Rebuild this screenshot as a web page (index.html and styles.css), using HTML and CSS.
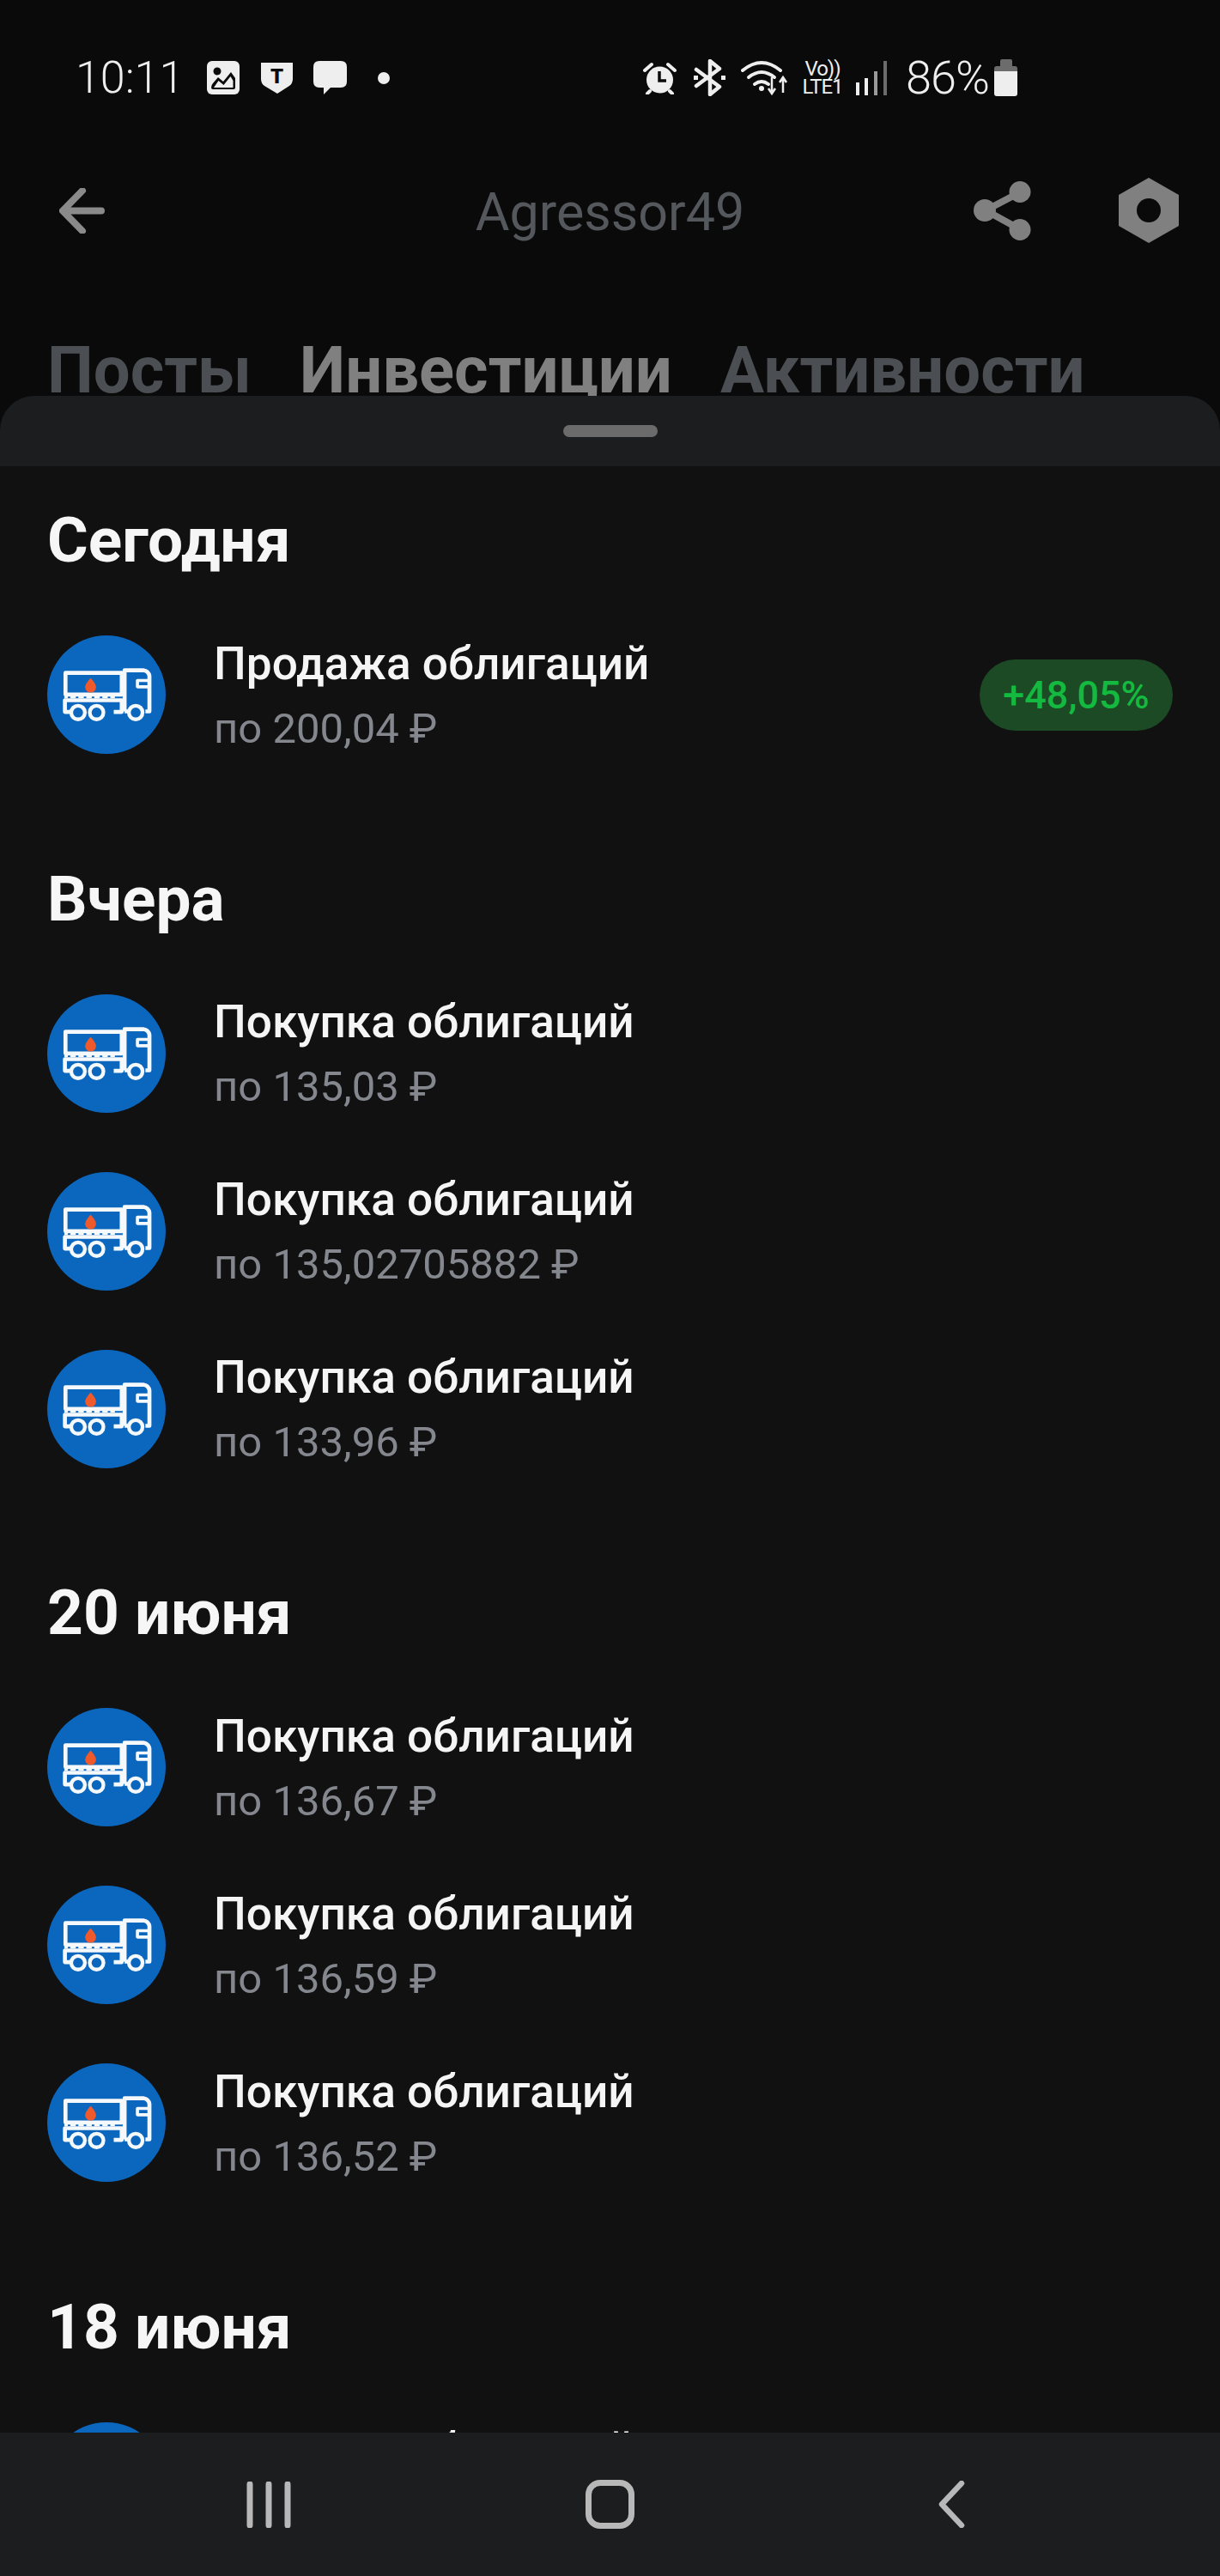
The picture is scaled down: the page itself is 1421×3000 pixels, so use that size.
FILE: index.html
```html
<!DOCTYPE html>
<html lang="ru">
<head>
    <meta charset="UTF-8">
    <title>Agressor49</title>
    <link rel="stylesheet" href="styles.css">
</head>
<body>
    <svg class="defs" width="0" height="0">
        <symbol id="truck" viewBox="0 0 415 415">
            <circle cx="207.5" cy="207.5" r="207.5" fill="#0b66bd"/>
            <g fill="none" stroke="#f6f9fc" stroke-width="14" stroke-linejoin="round">
                <rect x="64" y="131" width="197" height="76"/>
                <path d="M60 216h12m9 0h19m9 0h19m9 0h19m9 0h19m9 0h19m9 0h16" stroke-width="8"/>
                <path d="M85 268h-23v-41h199v41h-28"/>
                <path d="M271 266v-144h65q19 3 22 20v124h-14M271 266h14"/>
                <path d="M358 158h-42v22h42" stroke-width="11"/>
                <circle cx="108" cy="270" r="24" stroke-width="13"/>
                <circle cx="173" cy="270" r="24" stroke-width="13"/>
                <circle cx="310" cy="270" r="24" stroke-width="13"/>
            </g>
            <path d="M152 149q-19 21-19 32a19 19 0 0 0 38 0q0-11-19-32z" fill="#ee5a2c"/>
        </symbol>
    </svg>

    <div class="top">
        <div class="status">
            <span class="time">10:11</span>
            <svg class="ic-image" width="38" height="39" viewBox="0 0 38 39">
                <rect width="38" height="39" rx="6" fill="#eee"/>
                <circle cx="12" cy="12" r="4.500" fill="#0a0a0a"/>
                <path d="M5 31q0-3 2-5l6-7 6 5 9-11 5 7v11q0 2-2 2H7q-2 0-2-2z" fill="#0a0a0a"/>
                <path d="M8 31l5.500-8 6 5 8-10 3 5v8z" fill="#eee"/>
            </svg>
            <svg class="ic-shield" width="37" height="36" viewBox="0 0 37 36">
                <path d="M0 0h37v19q0 5-4 8l-14 9-15-9q-4-3-4-8z" fill="#eee"/>
                <text class="shield-t" x="18.500" y="24" text-anchor="middle">T</text>
            </svg>
            <svg class="ic-chat" width="39" height="39" viewBox="0 0 39 39">
                <path d="M7 0h25q7 0 7 7v17q0 7-7 7H20l-8 8v-8H7q-7 0-7-7V7q0-7 7-7z" fill="#eee"/>
            </svg>
            <span class="dot"></span>

            <div class="status-right">
                <svg width="39" height="38" viewBox="0 0 39 38">
                    <circle cx="19.500" cy="21" r="15.500" fill="#eee"/>
                    <path d="M19 11v11h8" fill="none" stroke="#0a0a0a" stroke-width="3.500"/>
                    <path d="M2 10l8-7M37 10l-8-7M8 34l-3 3M31 34l3 3" stroke="#eee" stroke-width="4" stroke-linecap="round"/>
                </svg>
                <svg class="s-bt" width="37" height="43" viewBox="0 0 37 43">
                    <path d="M3 12l27 20-11 9V2l11 9L3 31" fill="none" stroke="#eee" stroke-width="4.500" stroke-linejoin="round" stroke-linecap="round"/>
                    <path d="M0 21.500h5M32 21.500h5" stroke="#eee" stroke-width="5"/>
                </svg>
                <svg class="s-wifi" width="55" height="41" viewBox="0 0 55 41">
                    <g fill="none" stroke="#eee" stroke-width="4" stroke-linecap="round">
                        <path d="M2 12q22-18 44 0"/>
                        <path d="M9 20q15-12 30 0"/>
                        <path d="M16 28q8-6 16 0"/>
                    </g>
                    <circle cx="24" cy="33" r="3" fill="#eee"/>
                    <path d="M36 20v18m-4-5l4 6 4-6M49 38V21m-4 5l4-6 4 6" fill="none" stroke="#eee" stroke-width="2.500"/>
                </svg>
                <div class="lte"><span>Vo))</span><span>LTE1</span></div>
                <svg class="s-signal" width="36" height="40" viewBox="0 0 36 40">
                    <rect y="25" width="4" height="15" fill="#eee"/>
                    <rect x="10" y="20" width="4" height="20" fill="#eee"/>
                    <rect x="21" y="12" width="4" height="28" fill="#9a9a9a"/>
                    <rect x="32" y="0" width="4" height="40" fill="#6c6c6c"/>
                </svg>
                <span class="battery-text">86%</span>
                <div class="battery"><span class="battery-cap"></span><span class="battery-body"></span></div>
            </div>
        </div>

        <div class="toolbar">
            <svg class="back" width="53" height="53" viewBox="0 0 53 53">
                <path d="M27 3L4 26.500 27 50M5 26.500h44" fill="none" stroke="#8a8a8a" stroke-width="8" stroke-linecap="round" stroke-linejoin="round"/>
            </svg>
            <div class="title">Agressor49</div>
            <div class="toolbar-right">
                <svg width="68" height="69" viewBox="0 0 68 69">
                    <path d="M14 34L54 13M14 34L54 56" stroke="#808080" stroke-width="8" fill="none"/>
                    <circle cx="13" cy="34" r="13" fill="#808080"/>
                    <circle cx="54" cy="12.500" r="12.500" fill="#808080"/>
                    <circle cx="54" cy="56.500" r="12.500" fill="#808080"/>
                </svg>
                <svg width="70" height="76" viewBox="0 0 70 76">
                    <path d="M35 0l35 20v36L35 76 0 56V20z" fill="#808080"/>
                    <circle cx="35" cy="38" r="14" fill="#0a0a0a"/>
                </svg>
            </div>
        </div>

        <div class="tabs">
            <span class="tab">Посты</span>
            <span class="tab tab-active">Инвестиции</span>
            <span class="tab">Активности</span>
        </div>
    </div>

    <div class="sheet-head"><span class="handle"></span></div>

    <div class="list">
        <section class="group">
            <h2 class="group-title">Сегодня</h2>
            <div class="row">
                <svg class="row-icon"><use href="#truck"/></svg>
                <div class="row-text">
                    <div class="row-name">Продажа облигаций</div>
                    <div class="row-price">по 200,04 ₽</div>
                </div>
                <span class="badge">+48,05%</span>
            </div>
        </section>

        <section class="group">
            <h2 class="group-title">Вчера</h2>
            <div class="row">
                <svg class="row-icon"><use href="#truck"/></svg>
                <div class="row-text">
                    <div class="row-name">Покупка облигаций</div>
                    <div class="row-price">по 135,03 ₽</div>
                </div>
            </div>
            <div class="row">
                <svg class="row-icon"><use href="#truck"/></svg>
                <div class="row-text">
                    <div class="row-name">Покупка облигаций</div>
                    <div class="row-price">по 135,02705882 ₽</div>
                </div>
            </div>
            <div class="row">
                <svg class="row-icon"><use href="#truck"/></svg>
                <div class="row-text">
                    <div class="row-name">Покупка облигаций</div>
                    <div class="row-price">по 133,96 ₽</div>
                </div>
            </div>
        </section>

        <section class="group">
            <h2 class="group-title">20 июня</h2>
            <div class="row">
                <svg class="row-icon"><use href="#truck"/></svg>
                <div class="row-text">
                    <div class="row-name">Покупка облигаций</div>
                    <div class="row-price">по 136,67 ₽</div>
                </div>
            </div>
            <div class="row">
                <svg class="row-icon"><use href="#truck"/></svg>
                <div class="row-text">
                    <div class="row-name">Покупка облигаций</div>
                    <div class="row-price">по 136,59 ₽</div>
                </div>
            </div>
            <div class="row">
                <svg class="row-icon"><use href="#truck"/></svg>
                <div class="row-text">
                    <div class="row-name">Покупка облигаций</div>
                    <div class="row-price">по 136,52 ₽</div>
                </div>
            </div>
        </section>

        <section class="group">
            <h2 class="group-title">18 июня</h2>
            <div class="row">
                <svg class="row-icon"><use href="#truck"/></svg>
                <div class="row-text">
                    <div class="row-name">Покупка облигаций</div>
                    <div class="row-price">по 136,50 ₽</div>
                </div>
            </div>
        </section>
    </div>

    <div class="nav">
        <div class="nav-cell">
            <svg width="52" height="54" viewBox="0 0 52 54">
                <path d="M4 3v48M26 3v48M48 3v48" stroke="#b8b8b8" stroke-width="7" stroke-linecap="round"/>
            </svg>
        </div>
        <div class="nav-cell"><span class="nav-home"></span></div>
        <div class="nav-cell">
            <svg width="34" height="55" viewBox="0 0 34 55">
                <path d="M28 3L5 27.500 28 52" fill="none" stroke="#b8b8b8" stroke-width="6.500" stroke-linecap="round" stroke-linejoin="round"/>
            </svg>
        </div>
    </div>
</body>
</html>
```

FILE: styles.css
```css
body {
    margin: 0;
    height: 3000px;
    display: flex;
    flex-direction: column;
    overflow: hidden;
    background-color: #0a0a0a;
    font-family: Roboto, "Noto Sans", sans-serif;
}

.defs {
    display: block;
    height: 0;
}

/* dimmed part above the sheet, tabs get cut by its bottom edge */
.top {
    height: 461px;
    flex: none;
    overflow: hidden;
}

.status {
    height: 181px;
    display: flex;
    align-items: center;
    padding-left: 88px;
    padding-right: 236px;
    color: #eee;
}

.time {
    width: 122px;
    font-size: 52px;
    font-weight: 300;
    line-height: 44px;
}

.ic-image {
    margin-left: 31px;
}

.ic-shield {
    margin-left: 25px;
}

.shield-t {
    font-family: Roboto, sans-serif;
    font-size: 24px;
    font-weight: 900;
    fill: #0a0a0a;
}

.ic-chat {
    margin-left: 24px;
}

.dot {
    width: 14px;
    height: 14px;
    margin-left: 36px;
    border-radius: 50%;
    background-color: #eee;
}

.status-right {
    margin-left: auto;
    display: flex;
    align-items: center;
}

.s-bt {
    margin-left: 20px;
}

.s-wifi {
    margin-left: 18px;
}

.lte {
    width: 50px;
    margin-left: 15px;
    display: flex;
    flex-direction: column;
    align-items: center;
    color: #eee;
    font-size: 24px;
    line-height: 21px;
    letter-spacing: -1px;
}

.s-signal {
    margin-left: 14px;
}

.battery-text {
    width: 94px;
    margin-left: 22px;
    font-size: 54px;
    font-weight: 300;
    letter-spacing: -1px;
    line-height: 44px;
}

.battery {
    width: 27px;
    margin-left: 9px;
    display: flex;
    flex-direction: column;
    align-items: center;
}

.battery-cap {
    width: 14px;
    height: 8px;
    border-radius: 2px 2px 0 0;
    background-color: #6c6c6c;
}

.battery-body {
    width: 27px;
    height: 35px;
    border-radius: 3px;
    background: linear-gradient(#6c6c6c 6px, #eee 6px);
}

.toolbar {
    height: 128px;
    display: grid;
    grid-template-columns: 1fr auto 1fr;
    align-items: center;
    padding: 0 48px;
}

.back {
    margin-left: 21px;
}

.title {
    font-size: 61px;
    line-height: 70px;
    padding-top: 3px;
    color: #54575b;
}

.toolbar-right {
    display: flex;
    justify-content: flex-end;
    align-items: center;
    gap: 101px;
}

.tabs {
    display: flex;
    gap: 56px;
    padding-left: 55px;
    padding-top: 82px;
    font-size: 76px;
    line-height: 80px;
    font-weight: 700;
    color: #4b4e52;
    white-space: nowrap;
}

.tab-active {
    color: #808080;
}

.sheet-head {
    height: 82px;
    flex: none;
    display: flex;
    justify-content: center;
    padding-top: 34px;
    box-sizing: border-box;
    border-radius: 40px 40px 0 0;
    background-color: #1c1d1f;
}

.handle {
    width: 110px;
    height: 14px;
    border-radius: 7px;
    background-color: #6b6b6b;
}

.list {
    flex: 1;
    min-height: 0;
    overflow: hidden;
    box-sizing: border-box;
    padding: 51px 55px 0;
    background-color: #111112;
}

.group {
    margin-bottom: 99px;
}

.group-title {
    margin: 0 0 41.5px;
    height: 70px;
    font-size: 73px;
    line-height: 70px;
    font-weight: 700;
    color: #f6f6f6;
}

.row {
    height: 207px;
    display: flex;
    align-items: center;
}

.row-icon {
    width: 138px;
    height: 138px;
    flex: none;
}

.row-text {
    flex: 1;
    margin-left: 56px;
    padding-top: 3px;
}

.row-name {
    font-size: 53.2px;
    line-height: 76px;
    font-weight: 500;
    color: #f5f5f5;
}

.row-price {
    font-size: 49px;
    line-height: 76px;
    color: #84878e;
}

.badge {
    width: 225px;
    height: 83px;
    border-radius: 42px;
    display: flex;
    justify-content: center;
    align-items: center;
    background-color: #1b4a24;
    color: #14b93f;
    font-size: 45px;
    font-weight: 500;
}

.nav {
    height: 167px;
    flex: none;
    display: flex;
    justify-content: center;
    align-items: center;
    background-color: #1c1d1f;
}

.nav-cell {
    width: 398px;
    display: flex;
    justify-content: center;
    align-items: center;
}

.nav-home {
    width: 43px;
    height: 43px;
    border: 7px solid #b8b8b8;
    border-radius: 17px;
}
```
